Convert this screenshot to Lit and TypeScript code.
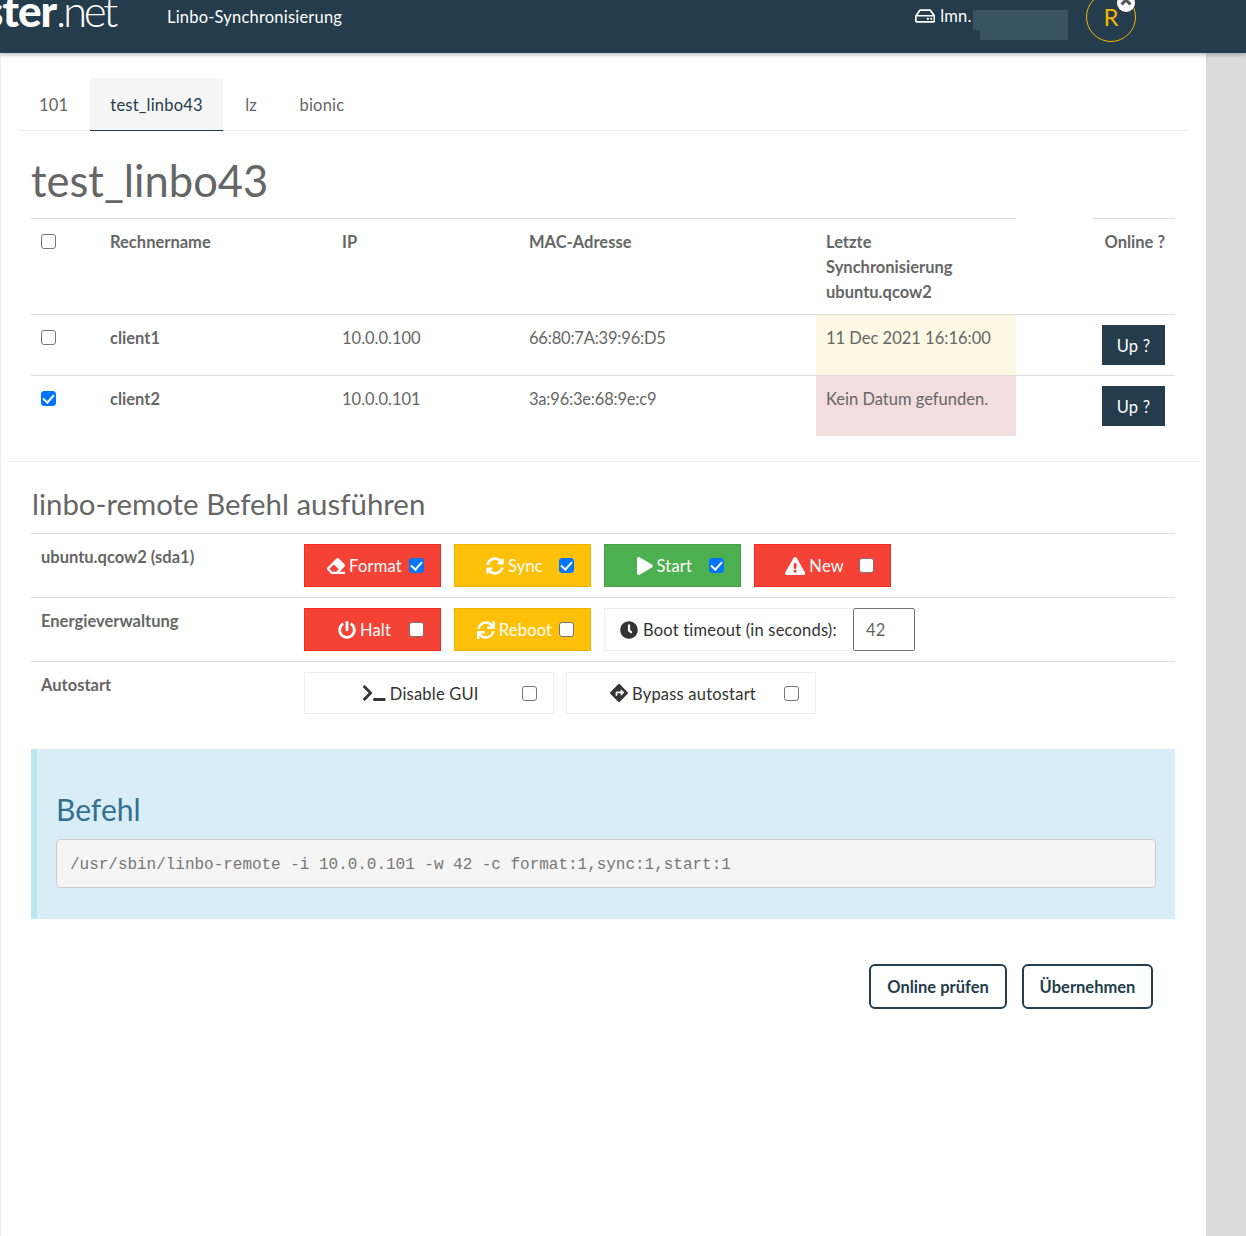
import { LitElement, html, css, svg } from "lit";
import { customElement, state } from "lit/decorators.js";

const ICONS: Record<string, [string, string]> = {
	eraser: ["0 0 512 512", "M497.941 273.941c18.745-18.745 18.745-49.137 0-67.882l-160-160c-18.745-18.745-49.136-18.746-67.883 0l-256 256c-18.745 18.745-18.745 49.137 0 67.882l96 96A48.004 48.004 0 0 0 144 480h356c6.627 0 12-5.373 12-12v-40c0-6.627-5.373-12-12-12H355.883l142.058-142.059zm-302.627-62.627l137.373 137.373L265.373 416H150.628l-80-80 124.686-124.686z"],
	syncAlt: ["0 0 512 512", "M370.72 133.28C339.458 104.008 298.888 87.962 255.848 88c-77.458.068-144.328 53.178-162.791 126.85-1.344 5.363-6.122 9.15-11.651 9.15H24.103c-7.498 0-13.194-6.807-11.807-14.176C33.933 94.924 134.813 8 256 8c66.448 0 126.791 26.136 171.315 68.685L463.03 40.97C478.149 25.851 504 36.559 504 57.941V192c0 13.255-10.745 24-24 24H345.941c-21.382 0-32.09-25.851-16.971-40.971l41.75-41.749zM32 296h134.059c21.382 0 32.09 25.851 16.971 40.971l-41.75 41.75c31.262 29.273 71.835 45.319 114.876 45.28 77.418-.07 144.315-53.144 162.787-126.849 1.344-5.363 6.122-9.15 11.651-9.15h57.304c7.498 0 13.194 6.807 11.807 14.176C478.067 417.076 377.187 504 256 504c-66.448 0-126.791-26.136-171.315-68.685L48.97 471.03C33.851 486.149 8 475.441 8 454.059V320c0-13.255 10.745-24 24-24z"],
	sync: ["0 0 512 512", "M440.65 12.57l4 82.77A247.16 247.16 0 0 0 255.83 8C134.73 8 33.91 94.92 12.29 209.82A12 12 0 0 0 24.09 224h49.05a12 12 0 0 0 11.67-9.26 175.91 175.91 0 0 1 317-56.94l-101.46-4.86a12 12 0 0 0-12.57 12v47.41a12 12 0 0 0 12 12H500a12 12 0 0 0 12-12V12a12 12 0 0 0-12-12h-47.37a12 12 0 0 0-11.98 12.57zM255.83 432a175.61 175.61 0 0 1-146-77.8l101.8 4.87a12 12 0 0 0 12.57-12v-47.4a12 12 0 0 0-12-12H12a12 12 0 0 0-12 12V500a12 12 0 0 0 12 12h47.35a12 12 0 0 0 12-12.6l-4.15-82.57A247.17 247.17 0 0 0 255.83 504c121.11 0 221.93-86.92 243.55-201.82a12 12 0 0 0-11.8-14.18h-49.05a12 12 0 0 0-11.67 9.26A175.86 175.86 0 0 1 255.83 432z"],
	play: ["0 0 448 512", "M424.4 214.7L72.4 6.6C43.8-10.3 0 6.1 0 47.9V464c0 37.5 40.7 60.1 72.4 41.3l352-208c31.4-18.5 31.5-64.1 0-82.6z"],
	warning: ["0 0 576 512", "M569.517 440.013C587.975 472.007 564.806 512 527.94 512H48.054c-36.937 0-59.999-40.055-41.577-71.987L246.423 23.985c18.467-32.009 64.72-31.951 83.154 0l239.94 416.028zM288 354c-25.405 0-46 20.595-46 46s20.595 46 46 46 46-20.595 46-46-20.595-46-46-46zm-43.673-165.346l7.418 136c.347 6.364 5.609 11.346 11.982 11.346h48.546c6.373 0 11.635-4.982 11.982-11.346l7.418-136c.375-6.874-5.098-12.654-11.982-12.654h-63.383c-6.884 0-12.356 5.78-11.981 12.654z"],
	power: ["0 0 512 512", "M400 54.1c63 45 104 118.6 104 201.9 0 136.8-110.8 247.7-247.5 248C120 504.3 8.2 393 8 256.4 7.9 173.1 48.9 99.3 111.8 54.2c11.7-8.3 28-4.8 35 7.7L162.6 90c5.9 10.5 3.1 23.8-6.6 31-41.5 30.8-68 79.6-68 134.9-.1 92.3 74.5 168.1 168 168.1 91.6 0 168.6-74.2 168-169.1-.3-51.8-24.7-101.8-68.1-134-9.7-7.2-12.4-20.5-6.5-30.9l15.8-28.1c7-12.4 23.2-16.1 34.8-7.8zM296 264V24c0-13.3-10.7-24-24-24h-32c-13.3 0-24 10.7-24 24v240c0 13.3 10.7 24 24 24h32c13.3 0 24-10.7 24-24z"],
	clock: ["0 0 512 512", "M256,8C119,8,8,119,8,256S119,504,256,504,504,393,504,256,393,8,256,8Zm92.49,313h0l-20,25a16,16,0,0,1-22.49,2.5h0l-67-49.72a40,40,0,0,1-15-31.23V112a16,16,0,0,1,16-16h32a16,16,0,0,1,16,16V256l58,42.5A16,16,0,0,1,348.49,321Z"],
	terminal: ["0 0 640 512", "M257.981 272.971L63.638 467.314c-9.373 9.373-24.569 9.373-33.941 0L7.029 444.647c-9.357-9.357-9.375-24.522-.04-33.901L161.011 256 6.99 101.255c-9.335-9.379-9.317-24.544.04-33.901l22.667-22.667c9.373-9.373 24.569-9.373 33.941 0L257.981 239.03c9.373 9.372 9.373 24.568 0 33.941zM640 456v-32c0-13.255-10.745-24-24-24H312c-13.255 0-24 10.745-24 24v32c0 13.255 10.745 24 24 24h304c13.255 0 24-10.745 24-24z"],
	directions: ["0 0 512 512", "M502.61 233.32L278.68 9.39c-12.52-12.52-32.83-12.52-45.36 0L9.39 233.32c-12.52 12.53-12.52 32.83 0 45.36l223.93 223.93c12.52 12.53 32.83 12.53 45.36 0l223.93-223.93c12.52-12.53 12.52-32.83 0-45.36zm-100.98 12.56l-84.21 77.73c-5.12 4.73-13.43 1.1-13.43-5.88V264h-96v64c0 4.42-3.58 8-8 8h-32c-4.42 0-8-3.58-8-8v-80c0-17.67 14.33-32 32-32h112v-53.73c0-6.97 8.3-10.61 13.43-5.88l84.21 77.73c3.43 3.17 3.43 8.59 0 11.76z"],
	hdd: ["0 0 576 512", "M567.403 235.642L462.323 84.589A48 48 0 0 0 422.919 64H153.081a48 48 0 0 0-39.404 20.589L8.597 235.642A48.001 48.001 0 0 0 0 263.054V400c0 26.51 21.49 48 48 48h480c26.51 0 48-21.49 48-48V263.054c0-9.801-3-19.366-8.597-27.412zM153.081 112h269.838l77.913 112H75.168l77.913-112zM528 400H48V272h480v128zm-32-64c0 17.673-14.327 32-32 32s-32-14.327-32-32 14.327-32 32-32 32 14.327 32 32zm-96 0c0 17.673-14.327 32-32 32s-32-14.327-32-32 14.327-32 32-32 32 14.327 32 32z"],
};

function icon(name: string) {
	const [box, d] = ICONS[name];
	return html`<svg class="icon" viewBox="${box}" fill="currentColor">${svg`<path d="${d}"></path>`}</svg>`;
}

const HOSTS = [
	{ name: "client1", ip: "10.0.0.100", mac: "66:80:7A:39:96:D5", sync: "11 Dec 2021 16:16:00", tone: "warn", checked: false },
	{ name: "client2", ip: "10.0.0.101", mac: "3a:96:3e:68:9e:c9", sync: "Kein Datum gefunden.", tone: "bad", checked: true },
];

const OS_ACTIONS = [
	{ label: "Format", icon: "eraser", tone: "red", checked: true },
	{ label: "Sync", icon: "syncAlt", tone: "yellow", checked: true },
	{ label: "Start", icon: "play", tone: "green", checked: true },
	{ label: "New", icon: "warning", tone: "red", checked: false },
];

@customElement("app-root")
export class AppRoot extends LitElement {
	static override styles = css`
		:host {
			display: block;
			min-height: 1236px;
			background: #dcdcdc;
			color: #666;
			font-family: "Lato", "Noto Sans", sans-serif;
			font-size: 16.5px;
			letter-spacing: 0.2px;
			line-height: 25px;
		}

		* { box-sizing: border-box; }

		.icon { height: 18px; width: auto; flex: none; display: block; }

		input[type="checkbox"] {
			appearance: none;
			position: relative;
			width: 15px;
			height: 15px;
			margin: 0;
			display: block;
			flex: none;
			background: #fff;
			border: 1.5px solid #767676;
			border-radius: 3px;
		}

		input[type="checkbox"]:checked {
			background: #0075ff;
			border-color: #0075ff;
		}

		input[type="checkbox"]:checked::after {
			content: "";
			position: absolute;
			left: 3px;
			top: -0.5px;
			width: 5px;
			height: 9px;
			border: solid #fff;
			border-width: 0 2px 2px 0;
			transform: rotate(42deg);
		}

		header {
			position: relative;
			z-index: 1;
			display: flex;
			align-items: flex-start;
			height: 53px;
			background: #253c4c;
			color: #fff;
			box-shadow: 0 2px 4px rgba(0, 0, 0, 0.25);
			overflow: hidden;
		}

		.logo {
			width: 167px;
			flex: none;
			font-size: 44px;
			line-height: 20px;
			margin-left: -16px;
			white-space: nowrap;
			font-weight: 900;
			letter-spacing: -1px;
		}

		.logo span { font-weight: 300; letter-spacing: -3.4px; }

		.title { margin-left: 16px; line-height: 34px; }

		.host {
			position: relative;
			display: flex;
			align-items: center;
			gap: 5px;
			width: 171px;
			margin-left: auto;
			line-height: 32px;
		}

		.blur {
			position: absolute;
			left: 58px;
			top: 10px;
			width: 95px;
			height: 20px;
			background: #3a5362;
		}

		.blur::after {
			content: "";
			position: absolute;
			left: 7px;
			right: 0;
			top: 20px;
			height: 10px;
			background: #3a5362;
		}

		.avatar {
			position: relative;
			flex: none;
			width: 50px;
			height: 50px;
			margin: -8px 110px 0 0;
			border: 1px solid #f5b800;
			border-radius: 50%;
			color: #f5b800;
			font-size: 24px;
			line-height: 48px;
			text-align: center;
		}

		.badge {
			position: absolute;
			left: 30px;
			top: 1px;
			width: 18px;
			height: 18px;
			border-radius: 50%;
			background: #fff;
			color: #555;
		}

		.badge svg { display: block; width: 18px; height: 18px; }

		main {
			width: 1206px;
			min-height: 1183px;
			background: #fff;
			box-shadow: inset 1px 0 #f0f0f0, 1px 0 #d2d2d2;
			padding-top: 25px;
			overflow: hidden;
		}

		.tabs {
			display: flex;
			margin: 0 18px 0 19px;
			border-bottom: 1px solid #eee;
			height: 53px;
		}

		.tabs a {
			padding: 0 20px;
			margin-right: 2.5px;
			height: 53px;
			line-height: 54px;
			color: #666;
			text-decoration: none;
		}

		.tabs a:first-child { margin-right: 2px; }

		.tabs a.active {
			background: #f5f5f5;
			color: #253c4c;
			border-bottom: 1px solid #253c4c;
		}

		.content { margin: 0 31px; }

		h1 {
			margin: 0;
			height: 87px;
			font-size: 43.5px;
			line-height: 98px;
			font-weight: 400;
			letter-spacing: 0;
		}

		table {
			width: 100%;
			table-layout: fixed;
			border-collapse: separate;
			border-spacing: 0;
		}

		th, td {
			padding: 11px 10px 9px;
			text-align: left;
			vertical-align: top;
			border-top: 1px solid #ddd;
			letter-spacing: 0;
		}

		th.gap { border-top-color: transparent; }
		th.online { text-align: right; }
		td.online { text-align: right; padding: 10px 10px 10px 9px; }
		td.name { font-weight: 700; }
		td.mac { letter-spacing: -0.2px; }
		td.warn { background: #fdf7e3; }
		td.bad { background: #f2dede; }
		.check { padding-top: 15px; }

		.up {
			display: inline-block;
			width: 63px;
			height: 40px;
			border: 0;
			background: #253c4c;
			color: #fff;
			font: inherit;
			letter-spacing: 0.2px;
			padding: 2px 0 0;
			vertical-align: top;
		}

		hr {
			margin: 25px 6px 0 7px;
			height: 1px;
			border: 0;
			background: #eee;
		}

		h2 {
			margin: 0 31px 0 32px;
			height: 71px;
			font-size: 29.4px;
			line-height: 84px;
			font-weight: 400;
			letter-spacing: 0;
		}

		.cmd-row {
			display: flex;
			padding: 10px;
			border-top: 1px solid #ddd;
		}

		.cmd-row > b { width: 263px; flex: none; padding-top: 1px; line-height: 25px; letter-spacing: 0; }

		.tiles { display: flex; }
		.tiles.tone { gap: 13px; }
		.tiles.plain { gap: 12px; }

		.tile {
			display: flex;
			align-items: center;
			width: 137px;
			height: 43px;
			padding-right: 16px;
			border: 1px solid #eee;
			color: #333;
		}

		.tiles.plain .tile { width: 250px; height: 42px; }

		.tile .label {
			flex: 1;
			margin-right: -15px;
			display: flex;
			align-items: center;
			justify-content: center;
			gap: 4px;
		}

		.tile .label span, .timeout span { padding-top: 2px; }

		.tile.red { background: #f44336; border-color: #f32c1e; color: #fff; }
		.tile.yellow { background: #ffc107; border-color: #ebb103; color: #fff; }
		.tile.green { background: #4caf50; border-color: #46a149; color: #fff; }

		.timeout-group { display: flex; }

		.timeout {
			display: flex;
			align-items: center;
			gap: 5px;
			width: 249px;
			height: 43px;
			padding-left: 15px;
			border: 1px solid #eee;
			border-right: 0;
			color: #333;
			white-space: nowrap;
		}

		.timeout-input {
			width: 62px;
			height: 43px;
			padding: 0 12px;
			border: 1px solid #767676;
			border-radius: 2px;
			color: #666;
			font: inherit;
			letter-spacing: inherit;
			background: #fff;
		}

		.info {
			margin-top: 25px;
			height: 170px;
			padding: 44px 19px 0 19px;
			background: #d9edf7;
			border-left: 6px solid #bce8f1;
		}

		.info h3 {
			margin: 0;
			height: 46px;
			font-size: 30px;
			line-height: 32px;
			font-weight: 400;
			letter-spacing: 0;
			color: #31708f;
		}

		pre {
			margin: 0;
			height: 49px;
			padding: 0 13px;
			background: #f5f5f5;
			border: 1px solid #ccc;
			border-radius: 4px;
			color: #777;
			font-family: "Liberation Mono", monospace;
			font-size: 16px;
			letter-spacing: -0.025px;
			line-height: 51px;
		}

		.actions {
			display: flex;
			justify-content: flex-end;
			gap: 15px;
			margin: 45px 22px 0 0;
		}

		.actions button {
			height: 45px;
			padding: 2px 0 0;
			background: #fff;
			border: 2px solid #253c4c;
			border-radius: 6px;
			color: #253c4c;
			font: inherit;
			font-weight: 700;
			letter-spacing: 0;
		}

		.actions .probe { width: 138px; }
		.actions .apply { width: 131px; }
	`;

	@state()
	private timeout = "42";

	private renderTile(item: { label: string; icon: string; tone: string; checked: boolean }) {
		return html`
			<label class="tile ${item.tone}">
				<span class="label">${icon(item.icon)}<span>${item.label}</span></span>
				<input type="checkbox" ?checked="${item.checked}" />
			</label>
		`;
	}

	override render() {
		return html`
			<header>
				<div class="logo">ster<span>.net</span></div>
				<div class="title">Linbo-Synchronisierung</div>
				<div class="host">${icon("hdd")}<span>lmn.</span><div class="blur"></div></div>
				<div class="avatar">
					R
					<div class="badge">
						<svg viewBox="0 0 18 18"><path d="M4.5 10.5l4.5-4.5 4.5 4.5" fill="none" stroke="currentColor" stroke-width="3"></path></svg>
					</div>
				</div>
			</header>
			<main>
				<nav class="tabs">
					<a href="#">101</a>
					<a href="#" class="active">test_linbo43</a>
					<a href="#">lz</a>
					<a href="#">bionic</a>
				</nav>
				<div class="content">
					<h1>test_linbo43</h1>
					<table>
						<colgroup>
							<col style="width:69px" /><col style="width:232px" /><col style="width:187px" /><col style="width:297px" />
							<col style="width:200px" /><col style="width:77px" /><col style="width:82px" />
						</colgroup>
						<thead>
							<tr>
								<th class="check"><input type="checkbox" /></th>
								<th>Rechnername</th>
								<th>IP</th>
								<th>MAC-Adresse</th>
								<th>Letzte<br />Synchronisierung<br />ubuntu.qcow2</th>
								<th class="gap"></th>
								<th class="online">Online ?</th>
							</tr>
						</thead>
						<tbody>
							${HOSTS.map(
								(host) => html`
									<tr>
										<td class="check"><input type="checkbox" ?checked="${host.checked}" /></td>
										<td class="name">${host.name}</td>
										<td>${host.ip}</td>
										<td class="mac">${host.mac}</td>
										<td class="${host.tone}">${host.sync}</td>
										<td></td>
										<td class="online"><button class="up">Up ?</button></td>
									</tr>
								`
							)}
						</tbody>
					</table>
				</div>
				<hr />
				<h2>linbo-remote Befehl ausführen</h2>
				<div class="content">
					<div class="cmd-row">
						<b>ubuntu.qcow2 (sda1)</b>
						<div class="tiles tone">${OS_ACTIONS.map((item) => this.renderTile(item))}</div>
					</div>
					<div class="cmd-row">
						<b>Energieverwaltung</b>
						<div class="tiles tone">
							${this.renderTile({ label: "Halt", icon: "power", tone: "red", checked: false })}
							${this.renderTile({ label: "Reboot", icon: "sync", tone: "yellow", checked: false })}
							<div class="timeout-group">
								<div class="timeout">${icon("clock")}<span>Boot timeout (in seconds):</span></div>
								<input class="timeout-input" .value="${this.timeout}" />
							</div>
						</div>
					</div>
					<div class="cmd-row">
						<b>Autostart</b>
						<div class="tiles plain">
							${this.renderTile({ label: "Disable GUI", icon: "terminal", tone: "", checked: false })}
							${this.renderTile({ label: "Bypass autostart", icon: "directions", tone: "", checked: false })}
						</div>
					</div>
					<div class="info">
						<h3>Befehl</h3>
						<pre>/usr/sbin/linbo-remote -i 10.0.0.101 -w 42 -c format:1,sync:1,start:1</pre>
					</div>
					<div class="actions">
						<button class="probe">Online prüfen</button>
						<button class="apply">Übernehmen</button>
					</div>
				</div>
			</main>
		`;
	}
}
